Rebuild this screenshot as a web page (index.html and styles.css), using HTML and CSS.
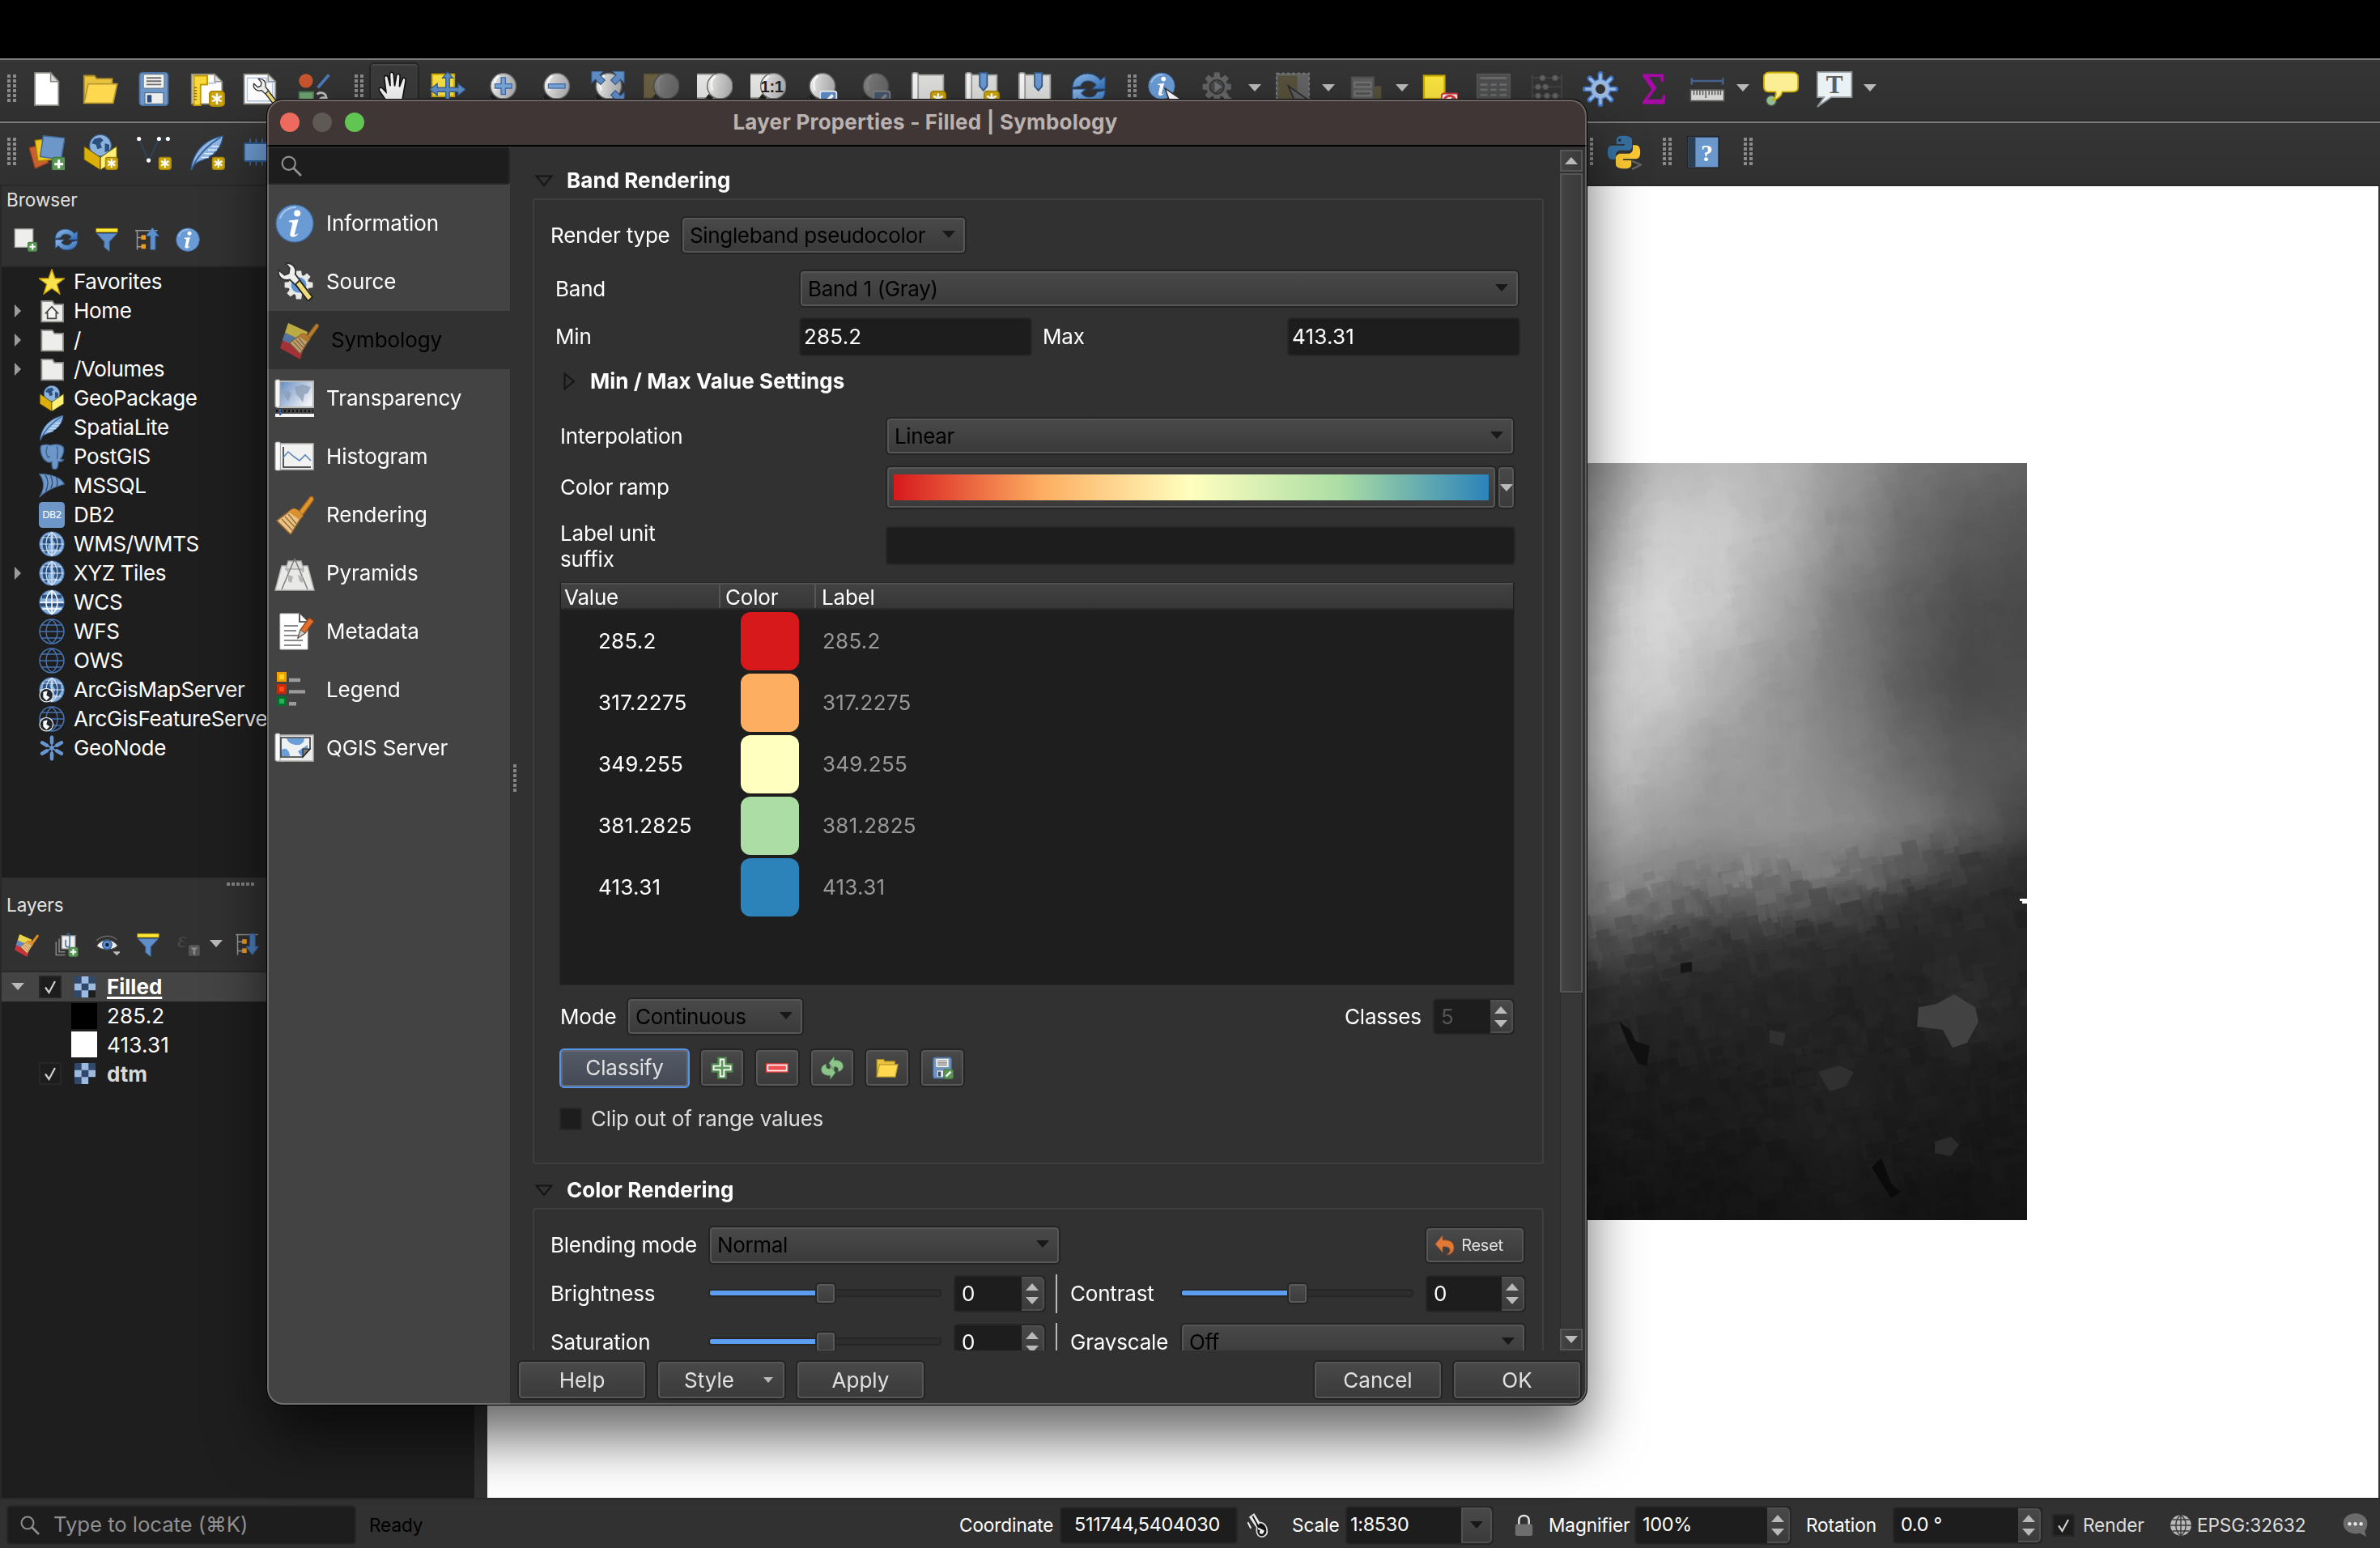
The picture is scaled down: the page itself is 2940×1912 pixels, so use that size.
FILE: index.html
```html
<!DOCTYPE html>
<html lang="en">
<head>
<meta charset="utf-8">
<title>Layer Properties - Filled | Symbology</title>
<link rel="stylesheet" href="styles.css">
</head>
<body>
<svg class="defs" width="0" height="0">
  <defs>
    <linearGradient id="gLens" x1="0" x2="1"><stop offset="0" stop-color="#eee"/><stop offset=".5" stop-color="#c9c9c9"/><stop offset="1" stop-color="#a9a9a9"/></linearGradient>
    <linearGradient id="gBlue" x1="0" x2="1" y1="0" y2="1"><stop offset="0" stop-color="#8fb8e6"/><stop offset="1" stop-color="#2f6db4"/></linearGradient>
    <linearGradient id="gMap" x1="0" x2="1" y1="0" y2=".6"><stop offset="0" stop-color="#5d86c0"/><stop offset="1" stop-color="#eef1f5"/></linearGradient>
  </defs>
  <symbol id="badge-star" viewBox="0 0 12 12"><rect x=".5" y=".5" width="11" height="11" rx="2.4" fill="#c9a40a" stroke="#a88600"/><path d="M6 2v8M2.6 4l6.8 4M9.4 4L2.6 8" stroke="#fff" stroke-width="1.5"/></symbol>
  <symbol id="badge-plus" viewBox="0 0 12 12"><rect x=".5" y=".5" width="11" height="11" rx="2.4" fill="#5b9558" stroke="#437a42"/><path d="M6 2.5v7M2.5 6h7" stroke="#fff" stroke-width="2"/></symbol>
  <symbol id="new" viewBox="0 0 24 24"><path d="M3.8 1h10.700l5.300 6v16h-16z" fill="#fff" stroke="#85857f"/><path d="M14.500 1v6h5.300z" fill="#d6d6d2" stroke="#85857f" stroke-width=".8"/></symbol>
  <symbol id="folder" viewBox="0 0 24 24"><path d="M1 21.500V3h7l1.500 2H20v4" fill="#e9c33e" stroke="#a88a25"/><path d="M1 21.500 3.800 8.500H23.300L20.500 21.500z" fill="#fed94f" stroke="#b79830"/></symbol>
  <symbol id="save" viewBox="0 0 24 24"><rect x="2.500" y="1" width="19" height="22" rx="2" fill="#6e97c9" stroke="#4a76a8"/><rect x="5" y="2" width="14" height="9.500" rx=".8" fill="#f2f2f0" stroke="#6a7a8c" stroke-width=".6"/><path d="M7 4.500h10M7 6.700h10M7 8.900h10" stroke="#6e6e6c" stroke-width="1"/><rect x="6" y="14.500" width="12.500" height="7.500" fill="#ededeb" stroke="#4a6a90" stroke-width=".6"/><rect x="7.500" y="16" width="3" height="5" fill="#2d4d78"/></symbol>
  <symbol id="layout" viewBox="0 0 24 24"><path d="M1.500 2H17l5 5v15H1.500z" fill="#fff" stroke="#85857f"/><path d="M17 2v5h5z" fill="#ddd" stroke="#85857f" stroke-width=".7"/><path d="M7 19V8h11" fill="none" stroke="#a9bfe0"/><path d="M3 3h9v6H7.500v14H3z" fill="#fbd83a" stroke="#c09600"/><path d="M3 11h2M3 13h2M3 15h2M3 17h2M3 19h2" stroke="#8a6d00" stroke-width=".8"/><use href="#badge-star" x="13" y="13" width="11" height="11"/></symbol>
  <symbol id="wrench" viewBox="0 0 24 24"><path d="M12.500 13.500 15 11l8 10.500-2.500 2.500z" fill="#f0dc78" stroke="#222" stroke-width=".9"/><path d="M3 5.500 6.500 8.500 9 7.500 9.500 4.500 7 1.500C11 1 14 4 12.800 8l2.700 3.500-2.700 2.700-3.300-3C5.500 12.500 2 9.500 3 5.500z" fill="#efefed" stroke="#333" stroke-width=".9"/></symbol>
  <symbol id="layoutmgr" viewBox="0 0 24 24"><path d="M.8 2H17l5 5v15H.8z" fill="#fff" stroke="#85857f"/><path d="M17 2v5h5z" fill="#ddd" stroke="#85857f" stroke-width=".7"/><path d="M3 4.500h13v3h4V20H3z" fill="none" stroke="#b4c6e4" stroke-width=".8"/><use href="#wrench" x="5" y="4" width="19" height="19"/></symbol>
  <symbol id="style" viewBox="0 0 24 24"><circle cx="6.500" cy="6.500" r="4.700" fill="#c9562e"/><path d="M14.500 11 22 2.500" stroke="#4a7ab8" stroke-width="2"/><rect x="2" y="14" width="9.500" height="9" fill="#6fa372" stroke="#4e7f52"/><path d="M14 15.500c2-2 6-1 6 2s-4 4-4 2 3-2 5-1M14 22c2-1 5-1 7 0" fill="none" stroke="#b9b9b9" stroke-width="1.600"/></symbol>
  <symbol id="hand" viewBox="0 0 24 24"><path d="M8 22c-1.800-3-4.500-6.500-6-9-.8-1.800 1-2.600 2.200-1.300L6.500 14 5.300 4.500c-.1-1.900 2-2.200 2.500-.4L9.300 10 9 2.200c0-2 2.400-2 2.600 0L12.300 10l1.200-7c.4-1.700 2.500-1.300 2.400.5L15.500 10.500l2-5.200c.7-1.500 2.500-.7 2.200.9-.7 4-1.300 8-2 11.500L17 24H8z" fill="#f4f4f4" stroke="#111" stroke-width=".9"/></symbol>
  <symbol id="pansel" viewBox="0 0 24 24"><rect x="1.500" y="2" width="15" height="15" fill="#f7df3f" stroke="#c9a800"/><path d="M12 .5l3.500 4H13.200v6.500h5.800V8.300L24 12.300l-5 4v-2.500h-5.800v6.500h2.300L12 24.500l-3.500-4.200h2.300v-6.500H5v2.500l-5-4 5-4V11h5.800V4.500H8.500z" fill="#5f8dc4" stroke="#2f5a90" stroke-width=".7"/></symbol>
  <symbol id="lens" viewBox="0 0 24 24"><path d="M7.500 16.500 1.500 24" stroke="#222" stroke-width="4"/><path d="M5.500 19 1 24.500" stroke="#e8c43a" stroke-width="2.600"/><circle cx="13.500" cy="10" r="8.600" fill="url(#gLens)" stroke="#6d6d6d" stroke-width=".8"/><path d="M10.500 3c-3 2-3.500 6-2 10" fill="none" stroke="#fff" stroke-width="1.600" opacity=".8"/></symbol>
  <symbol id="zoomin" viewBox="0 0 24 24"><use href="#lens"/><path d="M13.500 4v12M7.500 10h12" stroke="#3d6ca8" stroke-width="3.600"/><path d="M13.500 4.700v10.600M8.200 10h10.600" stroke="#7ba6d8" stroke-width="2.200"/></symbol>
  <symbol id="zoomout" viewBox="0 0 24 24"><use href="#lens"/><path d="M7.500 10h12" stroke="#3d6ca8" stroke-width="3.600"/><path d="M8.200 10h10.600" stroke="#7ba6d8" stroke-width="2.200"/></symbol>
  <symbol id="zoomfull" viewBox="0 0 24 24"><use href="#lens" x="-1"/><g fill="#5f8dc4" stroke="#2f5a90" stroke-width=".6"><path d="M1 0h8L6.500 2.500 10 6 7 9 3.500 5.500 1 8z"/><path d="M23 0h-8l2.500 2.500L14 6l3 3 3.500-3.500L23 8z"/><path d="M23 22v-8l-2.500 2.500L17 13l-3 3 3.500 3.500L15 22z"/></g></symbol>
  <symbol id="zoomsel" viewBox="0 0 24 24"><rect x="0" y="2" width="12" height="16" fill="#b9a25a" stroke="#8f7d3a"/><use href="#lens" x="2" y="0"/></symbol>
  <symbol id="zoomlayer" viewBox="0 0 24 24"><rect x="-.5" y="2" width="13" height="16" fill="#e6e6e4" stroke="#9a9a98"/><use href="#lens" x="2" y="0"/></symbol>
  <symbol id="zoomlast" viewBox="0 0 24 24"><use href="#lens" x="-1"/><rect x="11" y="13.500" width="11" height="11" rx="1.500" fill="#5f8dc4" stroke="#e8eef6"/><path d="M13.500 22l6-6" stroke="#fff" stroke-width="2"/></symbol>
  <symbol id="sheet" viewBox="0 0 24 24"><path d="M4.500 2.500H22V24H4.500z" fill="#dcdcda" stroke="#a2a2a0"/><rect x="1" y="1" width="4" height="23" rx="1.500" fill="#f3f3f1" stroke="#999"/></symbol>
  <symbol id="newmap" viewBox="0 0 24 24"><use href="#sheet"/><use href="#badge-star" x="13" y="13" width="11" height="11"/></symbol>
  <symbol id="ribbon" viewBox="0 0 24 24"><path d="M10.500 1h5v9L13 13l-2.500-3z" fill="#6a97cf" stroke="#2f5a90"/></symbol>
  <symbol id="newmark" viewBox="0 0 24 24"><use href="#sheet"/><use href="#ribbon"/><use href="#badge-star" x="13" y="13" width="11" height="11"/></symbol>
  <symbol id="marks" viewBox="0 0 24 24"><use href="#sheet"/><use href="#ribbon" x="1"/></symbol>
  <symbol id="refresh" viewBox="0 0 24 24"><path d="M1 11C1 3.500 9 0 15.500 2.500 17.500 3.300 19 4.800 19.800 6L23 3.500V12h-9l3-2.800C14 5.500 8 5.500 6.500 10z" fill="url(#gBlue)" stroke="#234f87" stroke-width=".6"/><path d="M23 13c0 7.500-8 11-14.500 8.500C6.500 20.700 5 19.200 4.200 18L1 20.500V12h9l-3 2.800c3 3.700 9 3.700 10.500-.8z" fill="url(#gBlue)" stroke="#234f87" stroke-width=".6"/></symbol>
  <symbol id="info" viewBox="0 0 24 24"><circle cx="12" cy="12" r="11.500" fill="#6a9bd4" stroke="#3f6ea8" stroke-width=".6"/><path d="M3 9C4.500 4 9 2 13 2" fill="none" stroke="#a9c9ee" stroke-width="1"/><circle cx="13.600" cy="5.800" r="2" fill="#fff"/><path d="M8.500 10.200 14.300 9.500 12 18.300c-.2 1 .9.900 2.200-.3-.6 2.600-5.600 3.500-5 .3L10.600 12c0-.8-1-.9-2-.9z" fill="#fff"/></symbol>
  <symbol id="identify" viewBox="0 0 24 24"><use href="#info" x="0" y="0" width="18.500" height="20"/><path d="M11.500 11.500 22.500 19 18 19.500 16 24z" fill="#fff" stroke="#333" stroke-width=".8"/></symbol>
  <symbol id="cog" viewBox="0 0 24 24"><g fill="#aaa"><circle cx="12" cy="12" r="8"/><path d="M10 1h4l.6 4h-5.200zM10 23h4l.6-4h-5.200zM1 10v4l4 .6v-5.200zM23 10v4l-4 .6v-5.200zM2.800 5.600l2.800-2.800 3.200 2.500-3.500 3.500zM21.200 18.400l-2.800 2.800-3.200-2.500 3.500-3.500zM18.400 2.800l2.800 2.800-2.500 3.200-3.500-3.500zM5.600 21.200l-2.800-2.800 2.500-3.200 3.500 3.500z"/></g><circle cx="12" cy="12" r="5.500" fill="#5e6870" stroke="#333"/></symbol>
  <symbol id="cog-light" viewBox="0 0 24 24"><g fill="#e8e8e6"><circle cx="12" cy="12" r="8"/><path d="M10 1h4l.6 4h-5.200zM10 23h4l.6-4h-5.200zM1 10v4l4 .6v-5.200zM23 10v4l-4 .6v-5.200zM2.800 5.600l2.800-2.800 3.200 2.500-3.500 3.500zM21.200 18.400l-2.800 2.800-3.200-2.500 3.500-3.500zM18.400 2.800l2.800 2.800-2.500 3.200-3.500-3.500zM5.600 21.200l-2.800-2.800 2.500-3.200 3.500 3.500z"/></g><circle cx="12" cy="12" r="6" fill="#5f92d0"/></symbol>
  <symbol id="action" viewBox="0 0 24 24"><use href="#cog" width="21" height="21"/><path d="M9 7l5 3.500L9 14z" fill="#ccc"/><path d="M14 14l9 6-4 .5L17 24z" fill="#bbb"/></symbol>
  <symbol id="select" viewBox="0 0 24 24"><rect x="1" y="1.500" width="22" height="22" fill="#aaa" stroke="#ddd" stroke-dasharray="2 1.500"/><rect x="2" y="3" width="13" height="18" fill="#8a7d48"/><path d="M9 10l13 9-5 .5-2 4.500z" fill="#999" stroke="#222"/></symbol>
  <symbol id="form" viewBox="0 0 24 24"><rect x="7" y="10" width="15" height="13" fill="#8a7d48"/><rect x="2" y="4" width="15" height="17" fill="#999" stroke="#777"/><path d="M4 7.500h11v3H4zM4 13.500h11v3H4z" fill="#888" stroke="#ddd"/></symbol>
  <symbol id="deselect" viewBox="0 0 24 24"><rect x="1" y="3" width="14" height="15.500" fill="#f8e23f" stroke="#c9a800" stroke-width="1.200"/><rect x="13" y="15" width="11" height="11" rx="1.500" fill="#f3eeee" stroke="#c23b3b"/><circle cx="18.500" cy="20.500" r="4" fill="none" stroke="#d43c3c" stroke-width="1.600"/><path d="M16 23l5-5" stroke="#d43c3c" stroke-width="1.500"/></symbol>
  <symbol id="table" viewBox="0 0 24 24"><rect x="1" y="2" width="22" height="22" fill="#777" stroke="#888"/><path d="M3 4.500h18M3 9h5M10 9h4M16 9h5M3 12.500h5M10 12.500h4M16 12.500h5M3 16h5M10 16h4M16 16h5M3 19.500h5M10 19.500h4M16 19.500h5" stroke="#b7bec6" stroke-width="1.500"/></symbol>
  <symbol id="abacus" viewBox="0 0 24 24"><path d="M2 2v22M22 2v22M2 4.500h20M2 10.500h20M2 16.500h20" stroke="#666" stroke-width=".8"/><g fill="#aaa" stroke="#777" stroke-width=".6"><circle cx="9" cy="4.500" r="1.800"/><circle cx="17.500" cy="4.500" r="1.800"/><circle cx="6" cy="10.500" r="1.800"/><circle cx="11" cy="10.500" r="1.800"/><circle cx="6" cy="16.500" r="1.800"/><circle cx="12" cy="16.500" r="1.800"/><circle cx="17.500" cy="16.500" r="1.800"/></g></symbol>
  <symbol id="gear" viewBox="0 0 24 24"><path d="M12 1.800v20.400M1.800 12h20.400M4.800 4.800l14.400 14.400M19.200 4.800 4.800 19.200" stroke="#3f75c4" stroke-width="3.600" stroke-linecap="round"/><circle cx="12" cy="12" r="7" fill="#3f75c4"/><path d="M12 2.500v19M2.500 12h19M5.200 5.200l13.600 13.600M18.800 5.200 5.200 18.800" stroke="#9bb9e0" stroke-width="1.900" stroke-linecap="round"/><circle cx="12" cy="12" r="6.100" fill="#9bb9e0"/><circle cx="12" cy="12" r="3" fill="#333" stroke="#3a3f48" stroke-width=".6"/></symbol>
  <symbol id="ruler" viewBox="0 0 24 24"><path d="M1.500 6.500h21M1.500 4.500v4.500M22.500 4.500v4.500" stroke="#46628a" stroke-width="1.400"/><rect x=".7" y="12.500" width="22.600" height="7.500" fill="#d4d4d2" stroke="#555" stroke-width="1"/><path d="M3 13v3M5 13v3M7 13v3M9 13v3M11 13v5M13.200 13v3M15.200 13v3M17.200 13v3M19.200 13v3M21 13v3" stroke="#555" stroke-width=".8"/></symbol>
  <symbol id="tip" viewBox="0 0 24 24"><circle cx="5.500" cy="19.800" r="3.600" fill="#8fbf90" stroke="#444"/><path d="M4 .8h16c2 0 3.500 1.500 3.500 3v7c0 2-1.500 3-3.500 3H13c-.8 3-3 5-7 6 2-1.500 3-3 2.500-6H4C2 13.800.5 12.800.5 10.800v-7C.5 2.300 2 .8 4 .8z" fill="#fcee95" stroke="#c9a800"/></symbol>
  <symbol id="layers" viewBox="0 0 24 24"><path d="M0 9l8-2 5 12-9 4z" fill="#c9602f" stroke="#8f3e1c" stroke-width=".7"/><path d="M4 4l9-1 3 14-10 1z" fill="#efc51f" stroke="#a88600" stroke-width=".7"/><path d="M9.500 1 24 2.500 21.500 17 7.500 15z" fill="#6e97c9" stroke="#3f6797" stroke-width=".8"/><use href="#badge-plus" x="15" y="15" width="10" height="10"/></symbol>
  <symbol id="geopkg" viewBox="0 0 24 24"><path d="M1 8l11 6L23 8v9l-11 7L1 17z" fill="#e0b400"/><circle cx="12" cy="7.500" r="7.300" fill="#8cb2de" stroke="#3a5f8c" stroke-width=".6"/><path d="M8 3l4-1 2 2-2 2 1 3-3 1-1-3-3-1zM15 6l3 1v4l-3 1z" fill="#2c507e"/><path d="M1 8l11 7.500V24L1 17z" fill="#dcae08" stroke="#4a3c00" stroke-width=".5"/><path d="M23 8l-11 7.500V24l11-7z" fill="#fff176" stroke="#4a3c00" stroke-width=".5"/></symbol>
  <symbol id="geopkgnew" viewBox="0 0 24 24"><use href="#geopkg"/><use href="#badge-star" x="15" y="15" width="9" height="9"/></symbol>
  <symbol id="shape" viewBox="0 0 24 24"><path d="M2 3 8.500 18 15.500 3h6" fill="none" stroke="#2c4560" stroke-width="1"/><g fill="#fff"><circle cx="2" cy="3" r="1.400"/><circle cx="15.500" cy="3" r="1.400"/><circle cx="21.500" cy="3" r="1.400"/><circle cx="8.500" cy="17.500" r="1.400"/></g><use href="#badge-star" x="15" y="15" width="9" height="9"/></symbol>
  <symbol id="feather" viewBox="0 0 24 24"><path d="M1 24C2 14 8 4 22.500 1 22 8 17 15 7 18 4 19 2.500 21 1.500 24z" fill="#8fb6e2" stroke="#2f5a90" stroke-width=".7"/><path d="M1.500 23.500C5 15 11 8 21 2" fill="none" stroke="#2f5a90" stroke-width=".9"/><path d="M8 15.500h5M10 13h6M12.500 10.500h6M15 8h5" stroke="#e4eefa" stroke-width=".8"/></symbol>
  <symbol id="feathernew" viewBox="0 0 24 24"><use href="#feather"/><use href="#badge-star" x="15" y="15" width="9" height="9"/></symbol>
  <symbol id="chip" viewBox="0 0 24 24"><path d="M5 3v18M9 3v18M13 3v18M17 3v18" stroke="#3f6797"/><rect x="1" y="6" width="22" height="12" rx="1" fill="#6e9dd4" stroke="#2f5a90"/></symbol>
  <symbol id="python" viewBox="0 0 24 24"><path d="M11.500 1c-4 0-4.500 1.500-4.500 3v2.500h5.500v1H4C2 7.500 1 9 1 12s1 4.800 3 4.800h2.500V14c0-2 1.500-3.200 3.200-3.200h5C16.500 10.800 17.500 9.500 17.500 8V4c0-2-2-3-6-3z" fill="#3670a0"/><circle cx="9.200" cy="3.800" r="1" fill="#1c2d3a"/><path d="M12.500 23c4 0 4.500-1.500 4.500-3v-2.500h-5.500v-1h8.500c2 0 3-1.500 3-4.500s-1-4.800-3-4.800H18v2.600c0 2-1.500 3.200-3.200 3.200h-5C8 13 6.500 14.500 6.500 16v4c0 2 2 3 6 3z" fill="#fbc934"/><path d="M17.500 18l6 2.500-6 3" fill="none" stroke="#666" stroke-width="1.200"/></symbol>
  <symbol id="addsheet" viewBox="0 0 24 24"><rect x="1" y="1.500" width="18" height="18" fill="#eeeeec" stroke="#a2a29e"/><use href="#badge-plus" x="13.500" y="14" width="10" height="10"/></symbol>
  <symbol id="filter" viewBox="0 0 24 24"><path d="M2 6h20l-7.500 8v9.500l-5-4V14z" fill="#5f8fca" stroke="#3c6aa3" stroke-width=".8"/><rect x="1.500" y="1" width="21" height="3.600" fill="#fbe83a" stroke="#c9a800" stroke-width=".6"/></symbol>
  <symbol id="treeup" viewBox="0 0 24 24"><path d="M2 3v19M2 10h5M2 19h5M0 3h22" stroke="#999" stroke-width="1.200"/><rect x="6" y="7.500" width="4.500" height="4.500" fill="#f39a1d"/><rect x="6" y="16.500" width="4.500" height="4.500" fill="#f39a1d"/><path d="M15 22V8.500h-4.500L17 0l6.500 8.500H20V22z" fill="#5f8fca" stroke="#2f5a90" stroke-width=".7"/></symbol>
  <symbol id="treedown" viewBox="0 0 24 24"><path d="M2 2v20M2 9h5M2 18h5M0 2h22" stroke="#999" stroke-width="1.200"/><rect x="6.500" y="6.500" width="4.500" height="4.500" fill="#f39a1d"/><rect x="6.500" y="15.500" width="4.500" height="4.500" fill="#f39a1d"/><path d="M14 1v12.500h-4L16.500 22l6.500-8.500h-3.500V1z" fill="#4d7db8" stroke="#2f5a90" stroke-width=".7"/></symbol>
  <symbol id="star" viewBox="0 0 24 24"><path d="M12 .5l3 8.500h8.700l-7 5.300 2.700 9L12 18l-7.400 5.300 2.700-9L.3 9H9z" fill="#f9e44d" stroke="#c9a000" stroke-width="1"/></symbol>
  <symbol id="fold" viewBox="0 0 24 24"><path d="M2.500 3h10l2 3h8v16h-20z" fill="#ededeb" stroke="#8f8f8b" stroke-width="1.400"/></symbol>
  <symbol id="home" viewBox="0 0 24 24"><use href="#fold"/><path d="M8 19v-5H6.500L12 8l5.500 6H16v5z" fill="#f4f4f2" stroke="#444" stroke-width="1.300"/></symbol>
  <symbol id="elephant" viewBox="0 0 24 24"><path d="M2 2c4-2 7-1 9-.5C15 0 20 .5 22.500 3c1.500 3-.5 9-2.500 11 1 1 2.500.5 3 .8-1 1.800-3.500 2-5 1.700-.2 3 0 7.500-3.500 7.300-2.500-.2-2.500-3-2.500-7-2 1-4.500.5-5.500-1C3 14 .5 6 2 2z" fill="#6e97c9" stroke="#3f6390" stroke-width="1"/><path d="M8 2.500c-1.500 3-1.500 7 .5 10.500l2-1.500M16.500 2.500c1.500 3 1 6 .5 9v3" fill="none" stroke="#3f6390" stroke-width="1.100"/></symbol>
  <symbol id="mssql" viewBox="0 0 24 24"><path d="M.5 1C8 1 20 3 23.500 10.500 14 13 6 17 .5 22.500 6 14 5 7 .5 1z" fill="#6e97c9" stroke="#4a6c97" stroke-width=".8"/><path d="M6 2c3 5 3 9 .5 15M11 3c2 4 2 8 0 11.500M16 4.500c1.500 3 1.500 5.500.5 8" fill="none" stroke="#2f4a6c" stroke-width="1"/></symbol>
  <symbol id="globe" viewBox="0 0 24 24"><circle cx="12" cy="12" r="11.300" fill="#86aedd" stroke="#5380b8" stroke-width=".8"/><path d="M5 5c3-2 5-1 6 0l-1 3 1 3-3 3 1 4-2 3c-3-3-5-9-2-16zM14 4l6 3 1 6-3 5-4-2 1-5-2-3z" fill="#2c507e"/><path d="M1 12h22M3 6h18M3 18h18M12 1v22M12 1C5 6 5 18 12 23M12 1c7 5 7 17 0 22" fill="none" stroke="#dbe8f7" stroke-width=".9"/></symbol>
  <symbol id="globe2" viewBox="0 0 24 24"><circle cx="12" cy="12" r="11.300" fill="#86aedd" stroke="#5380b8" stroke-width=".8"/><path d="M3 5h18v3.500H3zM1 13h22v3H1z" fill="#2c507e"/><path d="M1 12h22M3 18h18M12 1v22M12 1C5 6 5 18 12 23M12 1c7 5 7 17 0 22" fill="none" stroke="#fff" stroke-width="1.200"/></symbol>
  <symbol id="globe3" viewBox="0 0 24 24"><circle cx="12" cy="12" r="11.200" fill="none" stroke="#4673b0" stroke-width="1.200"/><path d="M1 12h22M3 6h18M3 18h18M12 1C5 6 5 18 12 23M12 1c7 5 7 17 0 22" fill="none" stroke="#4673b0" stroke-width="1.100"/></symbol>
  <symbol id="arcbadge" viewBox="0 0 24 24"><circle cx="7" cy="17" r="6.200" fill="#20262e" stroke="#e9e9e9" stroke-width="1"/><path d="M4 14l4-1-1 4 3 2-3 3-3-3z" fill="#fff"/></symbol>
  <symbol id="arcmap" viewBox="0 0 24 24"><use href="#globe"/><use href="#arcbadge"/></symbol>
  <symbol id="arcfeat" viewBox="0 0 24 24"><use href="#globe3"/><use href="#arcbadge"/></symbol>
  <symbol id="geonode" viewBox="0 0 24 24"><g stroke="#6796d0" stroke-width="3.400" stroke-linecap="round"><path d="M12 2v5M12 17v5M3 7l4.500 2.500M16.500 14.500 21 17M21 7l-4.500 2.500M7.500 14.500 3 17"/><path d="M12 7v10M7 9l10 6M17 9 7 15" stroke-width="1.200"/></g><circle cx="12" cy="12" r="2" fill="#6796d0"/></symbol>
  <symbol id="brush" viewBox="0 0 24 24"><path d="M14.500 10 21.500 1c1.500-1 2.500.5 2 2L17 12z" fill="#e0962f" stroke="#a0621a" stroke-width=".7"/><path d="M10.500 8.500c2-1 5 1.500 6.500 4-1 1.200-2 2-2.500 3.500L9.500 24 1 15.500z" fill="#e8c48a" stroke="#9c6a2a" stroke-width=".8"/><path d="M4 14.500l6.500 7M6 13l6 6.500M8 11.500l5 6" stroke="#9c6a2a" stroke-width=".7"/><path d="M10.500 8.500c2-1 5 1.500 6.500 4l-2 2.500-7-5z" fill="#d99030"/></symbol>
  <symbol id="symb" viewBox="0 0 24 24"><path d="M5 1.500 17 7l-4.500 17L0 17z" fill="#c8333a"/><path d="M5 1.500 17 7l-2 6L3 7.500z" fill="#e8d64a"/><path d="M3 7.500 15 13l-1.500 5L1.500 12z" fill="#5b8cc8"/><use href="#brush" x="5" y="0" width="19" height="22"/></symbol>
  <symbol id="group" viewBox="0 0 24 24"><path d="M1 9v13h9M4 6v13h6" fill="none" stroke="#888" stroke-width="1.200"/><rect x="6.500" y="3" width="13.500" height="13" fill="#eee" stroke="#888"/><path d="M10.500 7v5c0 3 4 3 4 0V3c0-3-3-3-3 0" fill="none" stroke="#3f6797" stroke-width="1.200"/><use href="#badge-plus" x="13" y="14" width="10" height="10"/></symbol>
  <symbol id="eye" viewBox="0 0 24 24"><path d="M1 13C6 5 17 5 22 13 17 18 6 18 1 13z" fill="#f0f0f0" stroke="#444"/><path d="M1 8C6 2 16 2 21 7" fill="none" stroke="#666" stroke-width="1.300"/><circle cx="11.500" cy="12" r="4.600" fill="#5c8cc9" stroke="#2f5a90"/><circle cx="11.500" cy="12" r="1.800" fill="#0e2038"/><path d="M17 18.500h8l-4 4z" fill="#bbb"/></symbol>
  <symbol id="raster" viewBox="0 0 24 24"><rect width="24" height="24" fill="#31486a"/><path d="M8 0h8v8H8zM0 8h8v8H0zM16 8h8v8h-8zM8 16h8v8H8z" fill="#9dbbe0"/><path d="M16 16h8v8h-8z" fill="#1e1e1e"/></symbol>
  <symbol id="check" viewBox="0 0 24 24"><path d="M6 12.500l4.500 6.500L18 5" fill="none" stroke="#cfcfcf" stroke-width="2.200"/></symbol>
  <symbol id="search" viewBox="0 0 24 24"><circle cx="9" cy="9" r="7.500" fill="none" stroke="#8f8f8f" stroke-width="2"/><path d="M14.500 14.500l8.500 8.500" stroke="#8f8f8f" stroke-width="2.600"/></symbol>
  <symbol id="source" viewBox="0 0 24 24"><use href="#cog-light" x="5" y="4.500" width="19" height="19"/><use href="#wrench" x="-1" y="-1" width="25" height="25"/></symbol>
  <symbol id="transp" viewBox="0 0 24 24"><rect x="1.500" y="1.500" width="22" height="16" fill="url(#gMap)" stroke="#b9b9b7"/><path d="M12 5l5-1.500 5 1.500-2 4-2 .5-1 5-2-3-2-2zM5 8l3-1 2 2-2 5-2-3z" fill="#8f9fb5" opacity=".8"/><rect x="0" y=".5" width="3" height="17" rx="1" fill="#f5f5f3" stroke="#aaa" stroke-width=".6"/><path d="M.5 19.800h23" stroke="#111" stroke-width="1.500" stroke-dasharray="1 1.500"/><rect x="0" y="21.500" width="24" height="2" fill="#f5f5f3"/><rect x="2.500" y="18.500" width="1.200" height="4" fill="#2d5fa8"/></symbol>
  <symbol id="histo" viewBox="0 0 24 24"><rect x="1.500" y="4" width="22" height="16" fill="#f2f2f0" stroke="#b5b5b3" stroke-width=".8"/><rect x="0" y="3" width="3.200" height="17.500" rx="1" fill="#fafafa" stroke="#aaa" stroke-width=".6"/><path d="M5 6v12.500h17" fill="none" stroke="#555"/><path d="M4.500 13 8 9l3.500 3 3.500 2.500 3.500-3.500 3.500 3.500" fill="none" stroke="#5b86bd" stroke-width=".8"/></symbol>
  <symbol id="pyramid" viewBox="0 0 24 24"><path d="M4 7.500h16l4 15H0z" fill="#e9e9e7" stroke="#b3b3b1" stroke-width=".7"/><path d="M8 4.500h8l1.500 5h-11z" fill="#dededc" stroke="#aaa" stroke-width=".7"/><path d="M12 3 4 22M12 3l8 19" fill="none" stroke="#777" stroke-width=".7"/><path d="M8 13l3 1-1 4-2-1zM14 13l3 1v4l-2-1zM6 9l3 .5-1 2.500zM15 9l3 1-1 2z" fill="#b5b5b3"/></symbol>
  <symbol id="meta" viewBox="0 0 24 24"><path d="M3 1h12l5 5v17H3z" fill="#fff" stroke="#d0d0ce" stroke-width=".5"/><path d="M15 1v5h5" fill="none" stroke="#333" stroke-width=".8"/><path d="M5.500 8.500H14M5.500 11.500H13M5.500 14.500H15M5.500 17.500H17M5.500 20.500H16" stroke="#8a8a88" stroke-width=".9"/><path d="M14 16l1.500-5L21 3.500 24 5.500 18.500 13z" fill="#e0702c" stroke="#803a14" stroke-width=".6"/><path d="M14 16l1.500-5 3 2z" fill="#ccc" stroke="#555" stroke-width=".5"/></symbol>
  <symbol id="legend" viewBox="0 0 24 24"><rect x="1" y="1" width="6" height="6" fill="#f29f05"/><rect x="2.500" y="2.500" width="3" height="3" fill="#ffd21f"/><rect x="1" y="8.500" width="6" height="6" fill="#c22c08"/><rect x="2.500" y="10" width="3" height="3" fill="#ff4a11"/><rect x="1" y="16" width="6" height="6" fill="#0a6b2f"/><rect x="2.500" y="17.500" width="3" height="3" fill="#1fb558"/><path d="M8.500 6h7M8.500 13.200h10M8.500 20.600h4.500" stroke="#9b9b9b" stroke-width="2.200"/></symbol>
  <symbol id="qserver" viewBox="0 0 24 24"><rect x="1.500" y="4" width="22" height="16" fill="#ececea" stroke="#b5b5b3" stroke-width=".8"/><rect x="0" y="3" width="3" height="17" rx="1" fill="#fafafa" stroke="#aaa" stroke-width=".6"/><path d="M3.500 5.500h18v7l-4.500 5H3.500z" fill="#edf1f4" stroke="#333" stroke-width=".8"/><path d="M7 6h11c0 3-3 4.500-5 4-2 0-5-1-6-4zM4 17v-4c3-2 5 1 5 4zM14 14l6-4v3l-4 4z" fill="#6b9ed8"/><path d="M17 17.500v-5h4.500z" fill="#777" stroke="#222" stroke-width=".6"/></symbol>
  <symbol id="plus" viewBox="0 0 24 24"><path d="M7 .5h10V7h6.500v10H17v6.500H7V17H.5V7H7z" fill="#4f8a4c"/><path d="M10 3h4v7h7v4h-7v7h-4v-7H3v-4h7z" fill="#5d9a59" stroke="#fff" stroke-width="1.600"/></symbol>
  <symbol id="minus" viewBox="0 0 24 24"><rect x="0" y="7" width="24" height="10" fill="#e23c3c"/><rect x="2" y="9" width="20" height="6" fill="#f05050" stroke="#fff" stroke-width="1.400"/></symbol>
  <symbol id="swap" viewBox="0 0 24 24"><path d="M14 0v4c6-.5 9.500 2.500 9.500 6s-2 5-5 6c-1-3 1.500-5-4.500-5v4L8.500 7zM10 24v-4c-6 .5-9.500-2.500-9.500-6s2-5 5-6c1 3-1.500 5 4.500 5V9l5.500 8z" fill="#8cc48a" stroke="#4d8a4c" stroke-width=".6"/></symbol>
  <symbol id="saveas" viewBox="0 0 24 24"><use href="#save"/><rect x="13.500" y="13.500" width="10" height="10" rx="2" fill="#5b9558" stroke="#437a42"/><path d="M16 21l5-5" stroke="#fff" stroke-width="2"/></symbol>
  <symbol id="undo" viewBox="0 0 24 24"><path d="M9 0v6c8-1 14 2 14 9 0 6-5 9-9 9 4-2.500 5-5 3.500-8-1.500-2-4-2.500-8.500-2v7L0 10.500z" fill="#e07838" stroke="#a84e18" stroke-width=".7"/></symbol>
  <symbol id="mouse" viewBox="0 0 24 24"><path d="M4 4l4-3 5 8c6 0 8 5 8 9s-4 6-7 5-4-5-3-9z" fill="#111" stroke="#ddd" stroke-width="1.400"/><path d="M5 3l5 9M8 2l5 9M2 9l3 6M12 15l6 3" stroke="#eee" stroke-width="1.600"/><circle cx="15.500" cy="18.500" r="2" fill="#eee"/></symbol>
  <symbol id="lock" viewBox="0 0 24 24"><path d="M6.500 12V7c0-7 11-7 11 0v5" fill="none" stroke="#e2e2e2" stroke-width="2.200"/><rect x="2.500" y="11" width="19" height="13" rx="2" fill="#6e6e6e"/></symbol>
  <symbol id="crs" viewBox="0 0 24 24"><circle cx="12" cy="12" r="11" fill="#b9b9b9"/><path d="M1 12h22M3 6h18M3 18h18M12 1v22M12 1C5 6 5 18 12 23M12 1c7 5 7 17 0 22" fill="none" stroke="#3a3a3a" stroke-width="1.200"/></symbol>
  <symbol id="chat" viewBox="0 0 24 24"><path d="M12 1c6.500 0 11.500 4 11.500 9.500 0 4-1.500 6-2.500 7.500l1.500 5.500-6-3.500C7 22 .5 17 .5 10.500.5 5 5.500 1 12 1z" fill="#6b6b6b"/><g fill="#e8e8e8"><circle cx="6.500" cy="11" r="1.700"/><circle cx="12" cy="11" r="1.700"/><circle cx="17.500" cy="11" r="1.700"/></g></symbol>
</svg>

<div class="app">
  <div class="menubar"></div>

  <div class="toolbar toolbar-main">
    <i class="grip"></i>
    <span class="tool first"><svg><use href="#new"/></svg></span>
    <span class="tool"><svg><use href="#folder"/></svg></span>
    <span class="tool"><svg><use href="#save"/></svg></span>
    <span class="tool"><svg><use href="#layout"/></svg></span>
    <span class="tool"><svg><use href="#layoutmgr"/></svg></span>
    <span class="tool"><svg><use href="#style"/></svg></span>
    <i class="grip grip-mid"></i>
    <span class="tool active"><svg><use href="#hand"/></svg></span>
    <span class="tool"><svg><use href="#pansel"/></svg></span>
    <span class="tool"><svg><use href="#zoomin"/></svg></span>
    <span class="tool"><svg><use href="#zoomout"/></svg></span>
    <span class="tool"><svg><use href="#zoomfull"/></svg></span>
    <span class="tool off"><svg><use href="#zoomsel"/></svg></span>
    <span class="tool"><svg><use href="#zoomlayer"/></svg></span>
    <span class="tool"><svg viewBox="0 0 24 24"><use href="#zoomlayer" width="24" height="24"/><text x="14.500" y="14" font-family="Liberation Sans" font-weight="700" font-size="11" text-anchor="middle" fill="#222">1:1</text></svg></span>
    <span class="tool"><svg><use href="#zoomlast"/></svg></span>
    <span class="tool off"><svg><use href="#zoomlast"/></svg></span>
    <span class="tool"><svg><use href="#newmap"/></svg></span>
    <span class="tool"><svg><use href="#newmark"/></svg></span>
    <span class="tool"><svg><use href="#marks"/></svg></span>
    <span class="tool"><svg><use href="#refresh"/></svg></span>
    <i class="grip grip-mid2"></i>
    <span class="tool"><svg><use href="#identify"/></svg></span>
    <span class="tool off"><svg><use href="#action"/></svg></span><i class="drop"></i>
    <span class="tool off"><svg><use href="#select"/></svg></span><i class="drop"></i>
    <span class="tool off"><svg><use href="#form"/></svg></span><i class="drop"></i>
    <span class="tool"><svg><use href="#deselect"/></svg></span>
    <span class="tool off"><svg><use href="#table"/></svg></span>
    <span class="tool off"><svg><use href="#abacus"/></svg></span>
    <span class="tool"><svg><use href="#gear"/></svg></span>
    <span class="tool"><svg viewBox="0 0 24 24"><text x="12" y="22" font-family="Liberation Serif" font-size="30" text-anchor="middle" fill="#a80aa8" stroke="#a80aa8" stroke-width=".5">Σ</text></svg></span>
    <span class="tool"><svg><use href="#ruler"/></svg></span><i class="drop"></i>
    <span class="tool"><svg><use href="#tip"/></svg></span>
    <span class="tool"><svg viewBox="0 0 24 24"><path d="M.5.5h23.200v17H10L.5 24 5 17.500H.5z" fill="#e9f1f4" stroke="#8b9295"/><text x="12" y="14.500" font-family="Liberation Serif" font-weight="700" font-size="17" text-anchor="middle" fill="#5d5d5a">T</text></svg></span><i class="drop"></i>
  </div>

  <div class="toolbar toolbar-data">
    <i class="grip"></i>
    <span class="tool first"><svg><use href="#layers"/></svg></span>
    <span class="tool"><svg><use href="#geopkgnew"/></svg></span>
    <span class="tool"><svg><use href="#shape"/></svg></span>
    <span class="tool"><svg><use href="#feathernew"/></svg></span>
    <span class="tool"><svg><use href="#chip"/></svg></span>
    <i class="grip grip-py"></i>
    <span class="tool tool-py"><svg><use href="#python"/></svg></span>
    <i class="grip grip-help"></i>
    <span class="tool tool-help"><svg viewBox="0 0 24 24"><rect x="1" y="1" width="22" height="22" fill="#6a97cc" stroke="#22252a" stroke-width="1"/><rect x="1.500" y="1.500" width="5" height="21" fill="#2c3e50"/><text x="14.500" y="18" font-family="Liberation Serif" font-weight="700" font-size="17" text-anchor="middle" fill="#fff">?</text></svg></span>
    <i class="grip grip-end"></i>
  </div>

  <div class="work">
    <aside class="docks">
      <div class="dock-title">Browser</div>
      <div class="dock-tools dock-tools-browser">
        <svg><use href="#addsheet"/></svg><svg><use href="#refresh"/></svg><svg><use href="#filter"/></svg><svg><use href="#treeup"/></svg><svg><use href="#info"/></svg>
      </div>
      <div class="tree tree-browser">
        <div class="node"><b></b><svg><use href="#star"/></svg><span>Favorites</span></div>
        <div class="node more"><b></b><svg><use href="#home"/></svg><span>Home</span></div>
        <div class="node more"><b></b><svg><use href="#fold"/></svg><span>/</span></div>
        <div class="node more"><b></b><svg><use href="#fold"/></svg><span>/Volumes</span></div>
        <div class="node"><b></b><svg><use href="#geopkg"/></svg><span>GeoPackage</span></div>
        <div class="node"><b></b><svg><use href="#feather"/></svg><span>SpatiaLite</span></div>
        <div class="node"><b></b><svg><use href="#elephant"/></svg><span>PostGIS</span></div>
        <div class="node"><b></b><svg><use href="#mssql"/></svg><span>MSSQL</span></div>
        <div class="node"><b></b><svg viewBox="0 0 24 24"><rect width="24" height="24" rx="3.500" fill="#6e97c9"/><text x="12" y="15" font-family="DejaVu Sans" font-size="9" text-anchor="middle" fill="#fff">DB2</text></svg><span>DB2</span></div>
        <div class="node"><b></b><svg><use href="#globe"/></svg><span>WMS/WMTS</span></div>
        <div class="node more"><b></b><svg><use href="#globe"/></svg><span>XYZ Tiles</span></div>
        <div class="node"><b></b><svg><use href="#globe2"/></svg><span>WCS</span></div>
        <div class="node"><b></b><svg><use href="#globe3"/></svg><span>WFS</span></div>
        <div class="node"><b></b><svg><use href="#globe3"/></svg><span>OWS</span></div>
        <div class="node"><b></b><svg><use href="#arcmap"/></svg><span>ArcGisMapServer</span></div>
        <div class="node"><b></b><svg><use href="#arcfeat"/></svg><span>ArcGisFeatureServer</span></div>
        <div class="node"><b></b><svg><use href="#geonode"/></svg><span>GeoNode</span></div>
      </div>
      <div class="dock-split"><i class="dots-h"></i></div>
      <div class="dock-title dock-title-layers">Layers</div>
      <div class="dock-tools dock-tools-layers">
        <svg><use href="#symb"/></svg><svg><use href="#group"/></svg><svg><use href="#eye"/></svg><svg><use href="#filter"/></svg><svg viewBox="0 0 24 24"><text x="5" y="14" font-family="Liberation Serif" font-style="italic" font-size="22" text-anchor="middle" fill="#4a4a4a">ε</text><rect x="12" y="12" width="11" height="11" rx="1.500" fill="#555"/><path d="M14 14.500h7l-2.500 3v5l-2-1.500v-3.500z" fill="#888"/></svg><i class="drop"></i><svg><use href="#treedown"/></svg>
      </div>
      <div class="tree tree-layers">
        <div class="layer current"><b class="open"></b><i class="box"><svg><use href="#check"/></svg></i><svg class="ras"><use href="#raster"/></svg><span class="name u">Filled</span></div>
        <div class="layer num"><i class="sw sw-black"></i><span>285.2</span></div>
        <div class="layer num"><i class="sw sw-white"></i><span>413.31</span></div>
        <div class="layer"><b></b><i class="box"><svg><use href="#check"/></svg></i><svg class="ras"><use href="#raster"/></svg><span class="name dim">dtm</span></div>
      </div>
    </aside>
    <main class="canvas">
      <canvas id="terrain" width="564" height="935"></canvas>
    </main>
  </div>

  <footer class="status">
    <div class="locator"><svg><use href="#search"/></svg>Type to locate (⌘K)</div>
    <span class="ready">Ready</span>
    <span class="lbl-coord">Coordinate</span>
    <div class="field coord">511744,5404030</div>
    <svg class="i-mouse"><use href="#mouse"/></svg>
    <span class="lbl-scale">Scale</span>
    <div class="field scale"><span>1:8530</span><em><i class="tri down dark"></i></em></div>
    <svg class="i-lock"><use href="#lock"/></svg>
    <span class="lbl-mag">Magnifier</span>
    <div class="spin mag"><span>100%</span><em><i class="tri up"></i><i class="tri down"></i></em></div>
    <span class="lbl-rot">Rotation</span>
    <div class="spin rot"><span>0.0 °</span><em><i class="tri up"></i><i class="tri down"></i></em></div>
    <i class="box"><svg><use href="#check"/></svg></i>
    <span class="lbl-render">Render</span>
    <svg class="i-crs"><use href="#crs"/></svg>
    <span class="lbl-epsg">EPSG:32632</span>
    <svg class="i-chat"><use href="#chat"/></svg>
  </footer>
</div>

<section class="dialog">
  <header class="titlebar"><i class="light red"></i><i class="light gray"></i><i class="light green"></i><h1>Layer Properties - Filled | Symbology</h1></header>
  <div class="dlg-body">
    <nav class="side">
      <div class="side-search"><svg><use href="#search"/></svg></div>
      <ul>
        <li><svg><use href="#info"/></svg>Information</li>
        <li><svg><use href="#source"/></svg>Source</li>
        <li class="sel"><svg><use href="#symb"/></svg>Symbology</li>
        <li><svg><use href="#transp"/></svg>Transparency</li>
        <li><svg><use href="#histo"/></svg>Histogram</li>
        <li><svg><use href="#brush"/></svg>Rendering</li>
        <li><svg><use href="#pyramid"/></svg>Pyramids</li>
        <li><svg><use href="#meta"/></svg>Metadata</li>
        <li><svg><use href="#legend"/></svg>Legend</li>
        <li><svg><use href="#qserver"/></svg>QGIS Server</li>
      </ul>
    </nav>
    <div class="side-split"><i class="dots-v"></i></div>
    <div class="panel">
      <div class="scroller">
        <div class="form">
          <div class="group-title"><svg class="fold-tri"><path d="M1.500 1.500h19L11 13z"/></svg>Band Rendering</div>
          <div class="group">
            <div class="row r-type"><label>Render type</label><div class="combo"><span>Singleband pseudocolor</span><i class="tri down dark"></i></div></div>
            <div class="row r-band"><label>Band</label><div class="combo"><span>Band 1 (Gray)</span><i class="tri down dark"></i></div></div>
            <div class="row r-minmax"><label class="l1">Min</label><div class="field">285.2</div><label class="l2">Max</label><div class="field">413.31</div></div>
            <div class="sub-title"><svg class="fold-tri"><path d="M1.500 1.500v19L13 11z"/></svg>Min / Max Value Settings</div>
            <div class="row r-interp"><label>Interpolation</label><div class="combo"><span>Linear</span><i class="tri down dark"></i></div></div>
            <div class="row r-ramp"><label>Color ramp</label><div class="btn ramp"><i></i></div><div class="btn ramp-menu"><i class="tri down"></i></div></div>
            <div class="row r-suffix"><label>Label unit<br>suffix</label><div class="field"></div></div>
            <div class="table">
              <div class="thead"><span>Value</span><span>Color</span><span>Label</span></div>
              <div class="trow"><span>285.2</span><i style="background:#d7191c"></i><span>285.2</span></div>
              <div class="trow"><span>317.2275</span><i style="background:#fdae61"></i><span>317.2275</span></div>
              <div class="trow"><span>349.255</span><i style="background:#ffffbf"></i><span>349.255</span></div>
              <div class="trow"><span>381.2825</span><i style="background:#abdda4"></i><span>381.2825</span></div>
              <div class="trow"><span>413.31</span><i style="background:#2b83ba"></i><span>413.31</span></div>
            </div>
            <div class="row r-mode"><label class="l1">Mode</label><div class="combo"><span>Continuous</span><i class="tri down dark"></i></div><label class="l2">Classes</label><div class="spin off5"><span>5</span><em><i class="tri up"></i><i class="tri down"></i></em></div></div>
            <div class="row r-class"><div class="btn primary">Classify</div><div class="btn ico"><svg><use href="#plus"/></svg></div><div class="btn ico"><svg><use href="#minus"/></svg></div><div class="btn ico"><svg><use href="#swap"/></svg></div><div class="btn ico"><svg><use href="#folder"/></svg></div><div class="btn ico"><svg><use href="#saveas"/></svg></div></div>
            <div class="row r-clip"><i class="box"></i><label>Clip out of range values</label></div>
          </div>
          <div class="group-title second"><svg class="fold-tri"><path d="M1.500 1.500h19L11 13z"/></svg>Color Rendering</div>
          <div class="group group2">
            <div class="row r-blend"><label>Blending mode</label><div class="combo"><span>Normal</span><i class="tri down dark"></i></div><div class="btn reset"><svg><use href="#undo"/></svg>Reset</div></div>
            <div class="row r-slide"><label class="l1">Brightness</label><div class="slider"><i></i></div><div class="spin s1"><span>0</span><em><i class="tri up"></i><i class="tri down"></i></em></div><i class="vline"></i><label class="l2">Contrast</label><div class="slider"><i></i></div><div class="spin s2"><span>0</span><em><i class="tri up"></i><i class="tri down"></i></em></div></div>
            <div class="row r-slide r-sat"><label class="l1">Saturation</label><div class="slider"><i></i></div><div class="spin s1"><span>0</span><em><i class="tri up"></i><i class="tri down"></i></em></div><i class="vline"></i><label class="l2">Grayscale</label><div class="combo"><span>Off</span><i class="tri down dark"></i></div></div>
          </div>
        </div>
        <div class="scrollbar"><div class="sb-btn"><i class="tri up"></i></div><div class="sb-thumb"></div><div class="sb-track"></div><div class="sb-btn"><i class="tri down"></i></div></div>
      </div>
      <div class="actions">
        <div class="btn">Help</div><div class="btn style">Style<i class="tri down small"></i></div><div class="btn">Apply</div>
        <div class="btn cancel">Cancel</div><div class="btn">OK</div>
      </div>
    </div>
  </div>
</section>
<script src="terrain.js"></script>
</body>
</html>
```
FILE: styles.css
```css
* { box-sizing: border-box; }
body { margin: 0; width: 2940px; height: 1912px; overflow: hidden; background: #000; color: #fff; font: 26px/1.2 Inter, "Liberation Sans", sans-serif; letter-spacing: -.2px; position: relative; }
i, em { font-style: normal; display: block; }
svg { display: block; flex: none; overflow: visible; }
.defs { position: absolute; }
label, span { white-space: nowrap; }

.app { height: 1912px; display: flex; flex-direction: column; background: #313131; }
.menubar { height: 72px; background: #000; }

/* toolbars */
.toolbar { display: flex; align-items: center; height: 78px; border-top: 2px solid #7b7b7b; border-bottom: 2px solid #292929; background: linear-gradient(#353535, #303030); padding: 0 0 3px 9px; }
.toolbar-data { height: 80px; padding-bottom: 4px; }
.grip { flex: none; width: 11px; height: 36px; background: repeating-linear-gradient(transparent 0 4px, #333 4px 6px), linear-gradient(90deg, #8a8a8a 0 4px, transparent 4px 7px, #8a8a8a 7px); }
.tool { flex: none; width: 66px; height: 66px; display: flex; align-items: center; justify-content: center; }
.tool svg { width: 44px; height: 44px; }
.tool.first { margin-left: 5px; }
.tool.active { width: 62px; margin: 0 2px; border: 2px solid #252525; border-radius: 6px; background: #3a3a3a; box-shadow: inset 0 2px #4a4a4a; }
.grip-mid + .tool.active { margin-left: 7px; }
.tool.off { opacity: .4; }
.grip-mid { margin-left: 17px; }
.grip-mid2 { margin: 0 3px 0 15px; }
.drop { flex: none; width: 25px; height: 11px; display: flex; justify-content: center; }
.drop::before { content: ""; border: 8px solid transparent; border-top: 9px solid #b9b9b9; border-bottom: 0; }
.toolbar .drop { padding-right: 3px; }
.grip-py { margin-left: 1602px; }
.tool-py { margin-left: 5px; width: 66px; }
.grip-help { margin-left: 15px; }
.tool-help { margin-left: 6px; width: 66px; }
.tool-help svg { width: 42px; height: 44px; }
.grip-end { margin-left: 17px; }

/* docks */
.work { flex: 1; display: flex; min-height: 0; height: 1620px; }
.docks { width: 586px; flex: none; border-left: 2px solid #292929; }
.dock-title { height: 34px; line-height: 34px; padding-left: 6px; font-size: 22.500px; color: #e2e2e2; letter-spacing: 0; }
.dock-tools { display: flex; align-items: center; }
.dock-tools svg { width: 30px; height: 30px; margin-right: 20px; }
.dock-tools-browser { height: 64px; padding-left: 15px; }
.tree { background: #1e1e1e; border-top: 2px solid #292929; }
.tree-browser { height: 756px; }
.node { display: flex; align-items: center; height: 36px; padding-left: 16px; letter-spacing: -.35px; }
.node b { width: 8px; height: 16px; margin-right: 22px; flex: none; }
.node.more b { border: 8px solid transparent; border-left: 8px solid #9b9b9b; border-right: 0; }
.node svg { width: 32px; height: 32px; margin-right: 11px; }
.dock-split { height: 17px; padding: 6px 0 0 278px; }
.dots-h { width: 34px; height: 4px; background: repeating-linear-gradient(90deg, #848484 0 4px, transparent 4px 6px); }
.dock-title-layers { height: 33px; line-height: 33px; }
.dock-tools-layers { height: 65px; padding-left: 16px; }
.dock-tools-layers .drop { margin: 0 12px 0 -14px; }
.tree-layers { height: 651px; }
.layer { display: flex; align-items: center; height: 35.800px; }
.layer.num { letter-spacing: .2px; }
.layer b { width: 16px; margin: 0 18px 0 12px; height: 10px; }
.layer b.open { border: 8px solid transparent; border-top: 9px solid #b9b9b9; border-bottom: 0; }
.layer.current { background: #444; }
.box { width: 28px; height: 28px; flex: none; background: #1d1d1d; border: 2px solid #272727; }
.box svg { width: 24px; height: 24px; }
.ras { width: 26px; height: 26px; margin: 0 14px 0 16px; }
.name { font-weight: 700; letter-spacing: 0; }
.name.u { text-decoration: underline; text-decoration-thickness: 3px; text-underline-offset: 3px; text-decoration-skip-ink: none; }
.name.dim { color: #d9d9d9; }
.sw { width: 32px; height: 32px; margin: 0 12px 0 86px; flex: none; }
.sw-black { background: #000; }
.sw-white { background: #fff; }

.canvas { margin-left: 16px; width: 2336px; background: #fff; padding: 342px 0 0 1338px; flex: none; }
.canvas canvas { display: block; width: 564px; height: 935px; }

/* fields */
.field, .spin { background: #1d1d1d; border: 2px solid #272727; border-radius: 5px; display: flex; align-items: center; letter-spacing: .2px; }
.tri { width: 0; height: 0; border: 8px solid transparent; flex: none; }
.tri.down { border-top: 9px solid #b9b9b9; border-bottom: 0; }
.tri.up { border-bottom: 9px solid #b9b9b9; border-top: 0; }
.tri.dark { border-top-color: #181818; }
.tri.small { border-width: 7px 6px 0; }
.spin { justify-content: space-between; padding-left: 8px; }
.spin em { align-self: stretch; width: 28px; background: linear-gradient(#484848, #3b3b3b); border: 2px solid #505050; border-left: 0; border-radius: 0 5px 5px 0; display: flex; flex-direction: column; justify-content: center; align-items: center; gap: 8px; }

/* status bar */
.status { height: 62px; flex: none; display: flex; align-items: center; padding: 3px 0 0 8px; font-size: 22.600px; border-top: 2px solid #292929; letter-spacing: -.1px; }
.status > * { flex: none; }
.locator { width: 432px; height: 49px; background: #1d1d1d; border: 2px solid #272727; border-radius: 5px; display: flex; align-items: center; color: #8f8f8f; padding-left: 15px; font-size: 25.800px; }
.locator svg { width: 24px; height: 24px; margin-right: 17px; }
.ready { color: #000; margin-left: 16px; width: 729px; }
.lbl-coord { width: 124px; }
.status .field, .status .spin { font-size: 23.400px; letter-spacing: -.3px; }
.status .coord { width: 220px; height: 46px; padding-left: 16px; }
.i-mouse { width: 30px; height: 32px; margin: 0 27px 0 10px; }
.lbl-scale { width: 66px; }
.status .scale { width: 183px; height: 48px; padding-left: 4px; justify-content: space-between; }
.scale em { width: 38px; height: 44px; background: linear-gradient(#484848, #3b3b3b); border: 2px solid #505050; border-radius: 0 5px 5px 0; display: flex; align-items: center; justify-content: center; }
.i-lock { width: 27px; height: 31px; margin: 0 17px 0 24px; }
.lbl-mag { width: 106px; }
.mag { width: 194px; height: 48px; }
.lbl-rot { margin-left: 18px; width: 107px; }
.rot { width: 185px; height: 46px; margin-right: 12px; }
.lbl-render { margin-left: 10px; width: 107px; color: #ddd; }
.i-crs { width: 28px; height: 28px; margin-right: 6px; }
.lbl-epsg { width: 180px; color: #ddd; }
.i-chat { width: 31px; height: 31px; }

/* dialog window */
.dialog { position: absolute; left: 330px; top: 123px; width: 1630px; height: 1612px; border-radius: 20px; overflow: hidden; background: #313131; box-shadow: 0 0 0 1px #000, 0 40px 70px rgba(0,0,0,.6); }
.dialog::after { content: ""; position: absolute; inset: 0; border: 2px solid rgba(255,255,255,.24); border-radius: 20px; pointer-events: none; }
.titlebar { height: 58px; background: #403635; border-bottom: 2px solid #000; display: flex; align-items: center; padding-left: 16px; }
.light { width: 24px; height: 24px; border-radius: 50%; margin-right: 16px; }
.red { background: #ec6a5e; }
.gray { background: #5f5956; }
.green { background: #61c554; }
h1 { margin: 0 0 0 317px; width: 720px; text-align: center; font-size: 26px; font-weight: 700; color: #bab2b1; white-space: nowrap; letter-spacing: .2px; }
.dlg-body { display: flex; height: 1554px; }
.side { width: 300px; flex: none; background: #434343; }
.side-search { height: 47px; background: #1d1d1d; border: 2px solid #272727; padding: 9px 0 0 15px; border-radius: 0 4px 4px 0; }
.side-search svg { width: 26px; height: 26px; }
.side ul { list-style: none; margin: 12px 0 0; padding: 0; }
.side li { height: 72px; display: flex; align-items: center; padding-left: 9px; letter-spacing: -.1px; }
.side li svg { width: 50px; height: 48px; margin-right: 14px; }
.side li.sel { background: #313131; color: #000; padding-left: 15px; }
.side li.sel svg { opacity: .75; }
.side-split { width: 12px; flex: none; padding: 763px 0 0 4px; }
.dots-v { width: 4px; height: 34px; background: repeating-linear-gradient(#848484 0 4px, transparent 4px 6px); }
.panel { width: 1318px; }
.scroller { display: flex; height: 1487px; overflow: hidden; }
.form { width: 1285px; flex: none; padding: 0 20px 0 16px; }
.group-title { height: 64px; padding: 20px 0 0 3px; display: flex; align-items: center; font-weight: 700; letter-spacing: .05px; }
.group-title.second { height: 54px; padding-top: 10px; }
.fold-tri { width: 22px; height: 15px; margin-right: 17px; fill: none; stroke: #141414; stroke-width: 2; }
.group { border: 2px solid #3f3f3f; border-radius: 4px; height: 1193px; }
.group2 { height: 400px; }
.row { display: flex; align-items: center; }
.row > * { flex: none; }

.combo, .btn { background: linear-gradient(#494949, #3a3a3a); border: 2px solid #242424; border-radius: 6px; box-shadow: inset 0 0 0 2px #565656; display: flex; align-items: center; }
.combo { justify-content: space-between; color: #000; height: 47px; padding: 0 12px 0 9px; letter-spacing: -.35px; }
.combo .tri { margin-bottom: 2px; }
.btn { justify-content: center; color: #e0e0e0; }
.row .field { height: 48px; padding-left: 4px; }

.r-type { margin-top: 20px; padding-left: 20px; }
.r-type label { width: 161px; }
.r-type .combo { width: 353px; }
.r-band { margin-top: 19px; padding-left: 26px; }
.r-band label { width: 301px; }
.r-band .combo { width: 890px; }
.r-minmax { margin-top: 12px; padding-left: 26px; }
.r-minmax .l1 { width: 301px; }
.r-minmax .l2 { width: 315px; padding-left: 13px; }
.r-minmax .field { width: 288px; }
.sub-title { margin-top: 16px; height: 30px; padding-left: 36px; display: flex; align-items: center; font-weight: 700; letter-spacing: .05px; }
.sub-title .fold-tri { width: 14px; height: 22px; margin-right: 19px; }
.r-interp { margin-top: 29px; padding-left: 32px; }
.r-interp label, .r-ramp label, .r-suffix label { width: 402px; }
.r-interp .combo { width: 777px; }
.r-ramp { margin-top: 13px; padding-left: 32px; height: 54px; }
.ramp { width: 755px; height: 54px; }
.ramp i { width: 735px; height: 32px; background: linear-gradient(90deg, #d7191c, #fdae61 25%, #ffffbf 50%, #abdda4 75%, #2b83ba); }
.ramp-menu { width: 23px; height: 54px; padding: 0; }
.r-suffix { margin-top: 21px; padding-left: 32px; height: 48px; }
.r-suffix label { line-height: 32px; padding-top: 1px; }
.r-suffix .field { width: 778px; }
.table { margin: 21px 0 0 31px; width: 1180px; height: 498px; background: #1e1e1e; border: 1px solid #292929; padding: 0 1px; }
.thead { display: flex; height: 33px; border-top: 2px solid #505050; background: linear-gradient(#414141, #373737); border-bottom: 2px solid #2b2b2b; margin-bottom: 1px; }
.thead span { line-height: 31px; padding-left: 4px; border-right: 2px solid #565656; }
.thead span:nth-child(1) { width: 197px; }
.thead span:nth-child(2) { width: 118px; padding-left: 6px; }
.thead span:nth-child(3) { border: 0; padding-left: 7px; }
.trow { display: flex; align-items: center; height: 76px; padding-left: 46px; letter-spacing: .25px; }
.trow span:first-child { width: 176px; }
.trow i { width: 72px; height: 72px; border-radius: 12px; margin-right: 29px; }
.trow span:last-child { color: #999; }
.r-mode { margin-top: 15px; padding-left: 32px; height: 47px; }
.r-mode .l1 { width: 82px; }
.r-mode .combo { width: 219px; }
.r-mode .l2 { margin-left: 668px; width: 109px; }
.off5 { width: 101px; height: 45px; color: #555; }
.r-class { margin-top: 16px; padding-left: 31px; height: 48px; gap: 12px; }
.primary { width: 161px; height: 49px; background: linear-gradient(#555b66, #434a55); border-color: #5594e6; box-shadow: inset 0 0 0 2px #636a75; }
.ico { width: 56px; height: 48px; }
.ico svg { width: 28px; height: 28px; }
.r-clip { margin-top: 23px; padding-left: 31px; }
.r-clip label { margin-left: 11px; color: #ddd; letter-spacing: -.2px; }
.r-blend { margin-top: 20px; padding-left: 20px; height: 47px; letter-spacing: -.25px; }
.r-blend label { width: 195px; }
.r-blend .combo { width: 435px; height: 48px; }
.reset { margin-left: 450px; width: 124px; height: 46px; font-size: 20px; padding-right: 14px; }
.reset svg { width: 24px; height: 24px; margin-right: 8px; }
.r-slide { margin-top: 14px; padding-left: 20px; height: 45px; }
.r-slide.r-sat { margin-top: 15px; }
.r-slide .l1 { width: 195px; }
.r-slide .l2 { width: 136px; }
.slider { width: 288px; height: 10px; border: 2px solid #262626; border-radius: 4px; background: linear-gradient(90deg, #5c9ef0 50%, #2d2d2d 50%); display: flex; align-items: center; justify-content: center; margin: 0 15px 1px 0; }
.slider i { width: 26px; height: 27px; flex: none; border-radius: 5px; border: 2px solid #262626; background: linear-gradient(#4a4a4a, #3c3c3c); box-shadow: inset 0 0 0 2px #5a5a5a; margin-left: 2px; }
.s1 { width: 114px; height: 46px; margin-right: 12px; }
.s2 { width: 124px; height: 46px; }
.vline { width: 2px; height: 48px; background: #b9b9b9; margin-right: 16px; }
.r-sat .combo { width: 427px; }

.scrollbar { width: 28px; padding-top: 4px; display: flex; flex-direction: column; }
.sb-btn, .sb-thumb { background: linear-gradient(90deg, #434343, #3a3a3a); border: 2px solid #565656; }
.sb-btn { height: 27px; display: flex; align-items: center; justify-content: center; }
.sb-thumb { height: 1012px; margin-top: 2px; }
.sb-track { flex: 1; background: #373737; border: 1px solid #2a2a2a; }
.actions { display: flex; padding-top: 12px; margin-left: -3px; letter-spacing: 0; }
.actions .btn { flex: none; width: 160px; height: 49px; margin-right: 12px; }
.actions .style { justify-content: flex-start; padding-left: 32px; }
.actions .style .tri { margin-left: 36px; }
.actions .cancel { margin-left: 467px; }
```
FILE: terrain.js
```js
// Shaded elevation raster: a coarse brightness grid, interpolated and broken into small cells.
const cv = document.getElementById('terrain');
const ctx = cv.getContext('2d');
const W = cv.width, H = cv.height;
const xs = [0, 50, 110, 180, 260, 345, 420, 490, 564];
const ys = [0, 85, 180, 270, 360, 440, 500, 545, 590, 650, 780, 935];
const grid = [
  [150, 155, 185, 190, 180, 150, 120, 108, 98],
  [165, 180, 205, 205, 180, 140, 108, 92, 84],
  [185, 205, 215, 200, 165, 122, 95, 78, 74],
  [200, 212, 205, 180, 150, 122, 92, 74, 76],
  [205, 205, 180, 160, 150, 130, 105, 88, 84],
  [190, 180, 160, 150, 150, 140, 120, 96, 70],
  [165, 155, 135, 128, 130, 118, 88, 58, 44],
  [140, 128, 108, 88, 90, 70, 50, 42, 40],
  [105, 88, 66, 56, 52, 46, 40, 40, 38],
  [64, 52, 42, 40, 40, 36, 36, 46, 36],
  [34, 30, 28, 28, 32, 34, 30, 28, 27],
  [26, 22, 20, 20, 22, 24, 20, 20, 22]
];
function locate(a, v) {
  let i = 0;
  while (i < a.length - 2 && v > a[i + 1]) i++;
  const t = Math.min(1, Math.max(0, (v - a[i]) / (a[i + 1] - a[i])));
  return [i, t * t * (3 - 2 * t) * 0.5 + t * 0.5];
}
function shade(x, y) {
  const [i, tx] = locate(xs, x), [j, ty] = locate(ys, y);
  const a = grid[j][i] * (1 - tx) + grid[j][i + 1] * tx;
  const b = grid[j + 1][i] * (1 - tx) + grid[j + 1][i + 1] * tx;
  return a * (1 - ty) + b * ty;
}
let seed = 7;
const rnd = () => (seed = (seed * 16807) % 2147483647) / 2147483647;
for (let y = 0; y < H; y += 3) for (let x = 0; x < W; x += 3) {
  const g = shade(x, y) | 0;
  ctx.fillStyle = `rgb(${g},${g},${g})`;
  ctx.fillRect(x, y, 3, 3);
}
for (let k = 0; k < 2600; k++) {
  const x = rnd() * W, y = rnd() * H, s = 8 + rnd() * 20, t = 8 + rnd() * 20;
  const smooth = y < 520 - x * 0.12;
  const g = Math.max(12, shade(x, y) * (1 + (rnd() - 0.5) * (smooth ? 0.07 : 0.3))) | 0;
  ctx.save();
  ctx.globalAlpha = smooth ? 0.3 : 0.6;
  ctx.translate(x, y);
  ctx.rotate(-0.2);
  ctx.fillStyle = `rgb(${g},${g},${g})`;
  ctx.fillRect(-s / 2, -t / 2, s, t);
  ctx.restore();
}
function blob(pts, g) {
  ctx.fillStyle = `rgb(${g},${g},${g})`;
  ctx.beginPath();
  pts.forEach(([x, y]) => ctx.lineTo(x, y));
  ctx.closePath();
  ctx.fill();
}
blob([[430, 672], [452, 668], [474, 656], [500, 672], [504, 690], [490, 716], [472, 722], [460, 700], [428, 696]], 66);
blob([[306, 752], [332, 744], [350, 752], [340, 770], [320, 776]], 48);
blob([[60, 690], [74, 700], [80, 714], [98, 720], [94, 745], [84, 742], [72, 720]], 17);
blob([[372, 870], [384, 858], [396, 890], [408, 900], [396, 908]], 11);
blob([[136, 618], [150, 616], [150, 628], [136, 630]], 22);
blob([[450, 838], [470, 832], [480, 842], [470, 856], [450, 852]], 44);
blob([[246, 700], [266, 704], [262, 720], [246, 716]], 48);
ctx.fillStyle = '#fff';
ctx.fillRect(555, 538, 4, 3);
ctx.fillRect(558, 538, 6, 6);
```
